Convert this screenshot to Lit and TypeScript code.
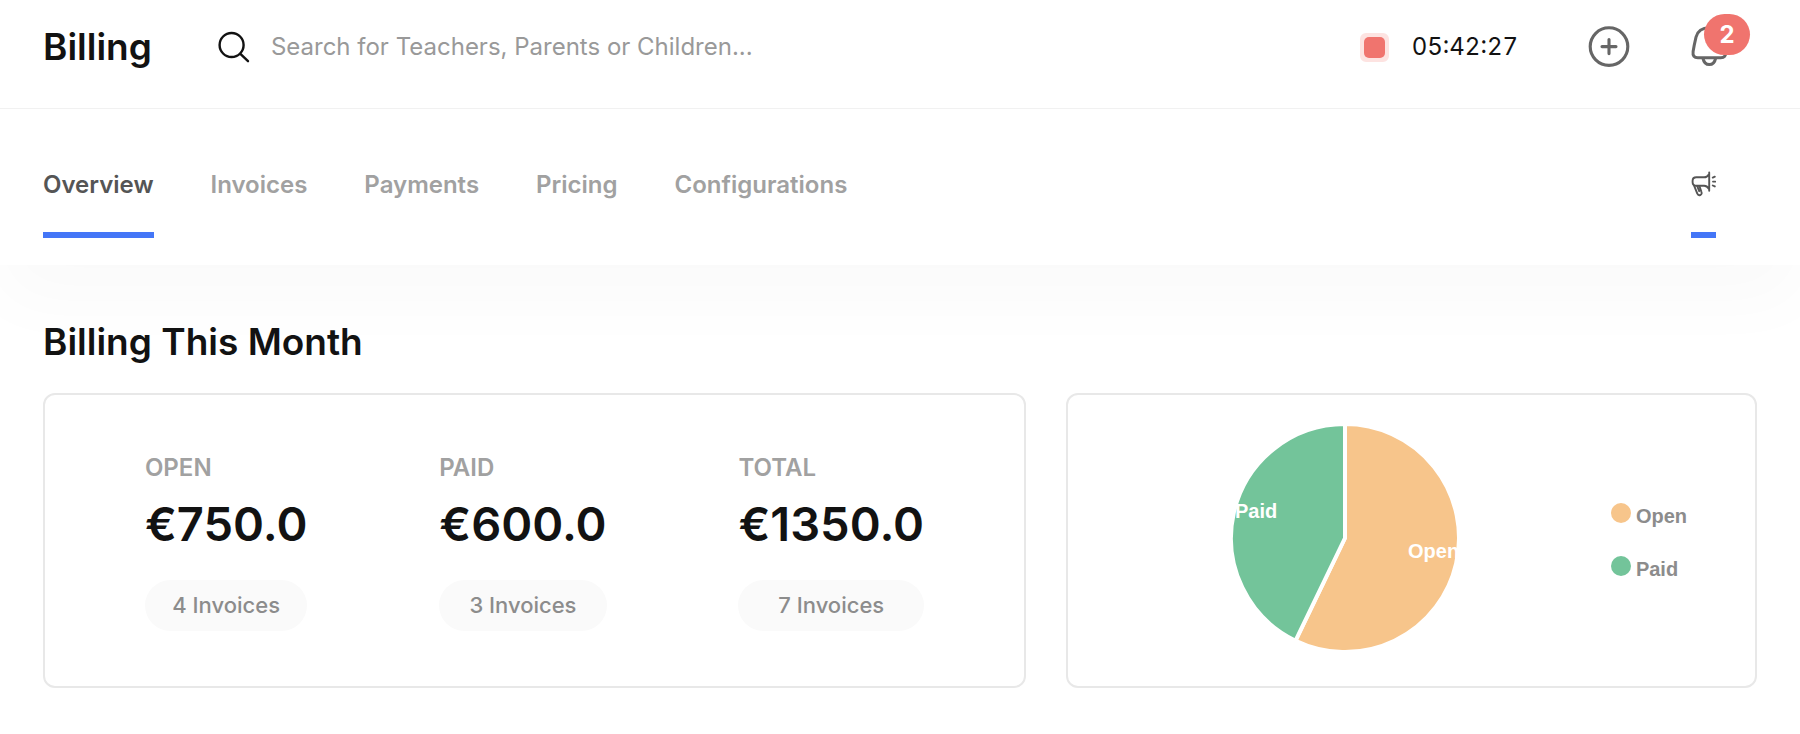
import { LitElement, html, css, svg } from "lit";
import { customElement, property } from "lit/decorators.js";
import { classMap } from "lit/directives/class-map.js";

interface Slice {
  label: string;
  amount: number;
  invoices: number;
  tone: string;
}

const SLICES: Slice[] = [
  { label: "Open", amount: 750, invoices: 4, tone: "open" },
  { label: "Paid", amount: 600, invoices: 3, tone: "paid" },
];

@customElement("billing-header")
class BillingHeader extends LitElement {
  static styles = css`
    :host {
      display: block;
      border-bottom: 1px solid #f1f1f1;
    }
    .bar {
      display: flex;
      align-items: center;
      height: 44px;
      padding: 25px 43px 39px;
    }
    .title {
      margin: 0;
      font-size: 37px;
      line-height: 44px;
      font-weight: 600;
    }
    .search {
      display: flex;
      align-items: center;
      flex: 1;
      gap: 21px;
      margin-left: 66px;
      min-width: 0;
    }
    .search svg,
    .icon svg {
      display: block;
      flex: none;
    }
    .field {
      flex: 1;
      min-width: 0;
      padding: 0;
      border: 0;
      outline: 0;
      background: transparent;
      font: inherit;
      font-size: 24px;
      line-height: 32px;
      color: #121212;
    }
    .field::placeholder {
      color: #999;
      opacity: 1;
    }
    .timer {
      display: flex;
      align-items: center;
      gap: 23px;
    }
    .stop {
      width: 29px;
      height: 29px;
      padding: 0;
      border: 4px solid #fde3e1;
      border-radius: 6px;
      background: #fde3e1;
    }
    .stop span {
      display: block;
      height: 21px;
      border-radius: 5px;
      background: #f0746e;
    }
    .time {
      font-size: 24px;
      line-height: 32px;
      font-variant-numeric: tabular-nums;
    }
    .icon {
      position: relative;
      padding: 0;
      border: 0;
      background: none;
      color: #666;
    }
    .add {
      margin-left: 70px;
    }
    .bell {
      margin: 0 27px 0 58px;
    }
    .badge {
      position: absolute;
      left: 16px;
      top: -11px;
      width: 46px;
      border-radius: 21px;
      background: #f0746e;
      color: #fff;
      font-family: Inter, sans-serif;
      font-size: 24px;
      font-weight: 700;
      line-height: 41px;
      text-align: center;
    }
  `;

  render() {
    return html`
      <header class="bar">
        <h1 class="title">Billing</h1>
        <label class="search">
          <svg width="32" height="32" viewBox="0 0 32 32" fill="none" stroke="#121212" stroke-width="2.4" stroke-linecap="round" aria-hidden="true">
            <circle cx="13.6" cy="14" r="12" />
            <path d="M22.4 22.8 30 30.2" />
          </svg>
          <input class="field" type="search" aria-label="Search" placeholder="Search for Teachers, Parents or Children..." />
        </label>
        <div class="timer">
          <button class="stop" aria-label="Stop timer"><span></span></button>
          <time class="time">05:42:27</time>
        </div>
        <button class="icon add" aria-label="Add">
          <svg width="42" height="42" viewBox="0 0 42 42" fill="none" stroke="currentColor" stroke-width="3.1" stroke-linecap="round">
            <circle cx="21" cy="20.6" r="18.8" />
            <path d="M21 13.600v14M14 20.600h14" />
          </svg>
        </button>
        <button class="icon bell" aria-label="Notifications, 2 unread">
          <svg width="42" height="44" viewBox="0 0 42 44" fill="none" stroke="currentColor" stroke-width="3" stroke-linejoin="round">
            <path d="M21.3 2.8C14 2.8 9.600 6 8 12.200 7 16.500 5.900 21.500 5.100 26.500c-.6 4.200 1.200 6.300 4.700 6.300h23c3.500 0 5.300-2.100 4.700-6.300-.8-5-1.900-10-2.900-14.300C33 6 28.600 2.800 21.300 2.800Z" />
            <path d="M15 33.400c.8 4 2.900 6.200 6.300 6.200s5.500-2.200 6.300-6.200" />
          </svg>
          <span class="badge">2</span>
        </button>
      </header>
    `;
  }
}

@customElement("billing-tabs")
class BillingTabs extends LitElement {
  static styles = css`
    :host {
      display: block;
      background: #fff;
      box-shadow: 0 36px 70px 0 rgba(0, 0, 0, 0.024);
    }
    .tabs {
      display: flex;
      align-items: stretch;
      gap: 57px;
      padding: 60px 84px 27px 43px;
    }
    .tab {
      display: flex;
      align-items: flex-start;
      height: 63px;
      border-bottom: 6px solid transparent;
      color: #a1a1a1;
      font-size: 24px;
      font-weight: 600;
      line-height: 32px;
      text-decoration: none;
    }
    .active {
      border-color: #4476f7;
      color: #555;
    }
    .news {
      margin-left: auto;
    }
    .news svg {
      display: block;
    }
  `;

  private names = ["Overview", "Invoices", "Payments", "Pricing", "Configurations"];

  render() {
    return html`
      <nav class="tabs" aria-label="Billing sections">
        ${this.names.map(
          (name, i) => html`<a href="#${name.toLowerCase()}" class=${classMap({ tab: true, active: i === 0 })}>${name}</a>`
        )}
        <a href="#news" class="tab active news" aria-label="Announcements">
          <svg width="25" height="32" viewBox="0 0 25 32" fill="none" stroke="currentColor" stroke-width="1.9" stroke-linecap="round" stroke-linejoin="round">
            <path d="M18.200 3.400v18.400M17.800 5.400c-1.200 2-2.600 2.900-4.600 2.900H5.400C3 8.300 1.600 9.600 1.600 11.800v1.400c0 2.200 1.400 3.500 3.800 3.500h7.800c2 0 3.400 1 4.600 3" />
            <path d="M3 16.400 6.200 24.400c.6 1.500 1.800 2.100 3.100 1.600 1.300-.5 1.700-1.700 1.100-3.200L8.400 17M6.200 17l2 5.200" />
            <path d="M21.800 8.600l2-.9M22 12.600h2.200M21.800 16.500l2 .9" />
          </svg>
        </a>
      </nav>
    `;
  }
}

@customElement("billing-stat")
class BillingStat extends LitElement {
  @property() label = "";
  @property({ type: Number }) amount = 0;
  @property({ type: Number }) invoices = 0;

  static styles = css`
    :host {
      display: flex;
      flex-direction: column;
    }
    .label {
      color: #a1a1a1;
      font-size: 24px;
      font-weight: 600;
      line-height: 32px;
      text-transform: uppercase;
    }
    .amount {
      margin: 8px 0 24px;
      font-size: 47px;
      font-weight: 600;
      line-height: 64px;
    }
    .count {
      border-radius: 26px;
      background: #fafafa;
      color: #8c8c8c;
      font-size: 22px;
      font-weight: 500;
      line-height: 51px;
      text-align: center;
    }
  `;

  render() {
    return html`
      <span class="label">${this.label}</span>
      <span class="amount">€${this.amount.toFixed(1)}</span>
      <span class="count">${this.invoices} Invoices</span>
    `;
  }
}

@customElement("billing-pie")
class BillingPie extends LitElement {
  @property({ attribute: false }) slices: Slice[] = [];

  static styles = css`
    :host {
      display: flex;
      align-items: center;
      font-family: "Liberation Sans", Arial, sans-serif;
      font-size: 20px;
      font-weight: 700;
    }
    .plot {
      display: flex;
      justify-content: center;
      flex: 1;
      padding: 0 0 6px 12px;
    }
    .pie {
      display: block;
    }
    .slice {
      stroke: #fff;
      stroke-width: 4px;
      stroke-linejoin: bevel;
    }
    .name {
      fill: #fff;
    }
    .open {
      fill: #f7c58b;
      background: #f7c58b;
    }
    .paid {
      fill: #73c49a;
      background: #73c49a;
    }
    .legend {
      display: grid;
      gap: 27px;
      margin: 0;
      padding: 3px 68px 0 0;
      list-style: none;
    }
    .entry {
      display: flex;
      gap: 5px;
      color: #8c8c8c;
      line-height: 26px;
    }
    .dot {
      width: 20px;
      height: 20px;
      border-radius: 50%;
    }
  `;

  private wedges() {
    const total = this.slices.reduce((sum, s) => sum + s.invoices, 0);
    const r = 114;
    let angle = 0;
    return this.slices.map((s) => {
      const from = angle;
      angle += (s.invoices / total) * Math.PI * 2;
      const point = (a: number) => `${(r * Math.sin(a)).toFixed(2)} ${(-r * Math.cos(a)).toFixed(2)}`;
      const large = angle - from > Math.PI ? 1 : 0;
      return svg`<path class="slice ${s.tone}" d="M0 0L${point(from)}A${r} ${r} 0 ${large} 1 ${point(angle)}Z" />`;
    });
  }

  render() {
    return html`
      <div class="plot">
        <svg class="pie" width="232" height="232" viewBox="-116 -116 232 232" role="img" aria-label="Open and paid invoices">
          ${this.wedges()}
          <text class="name" x="63" y="20">Open</text>
          <text class="name" x="-110" y="-20">Paid</text>
        </svg>
      </div>
      <ul class="legend">
        ${this.slices.map(
          (s) => html`<li class="entry"><span class="dot ${s.tone}"></span><span>${s.label}</span></li>`
        )}
      </ul>
    `;
  }
}

@customElement("app-root")
class AppRoot extends LitElement {
  static styles = css`
    :host {
      display: block;
      min-height: 100vh;
      background: #fff;
      color: #121212;
      font-family: Inter, sans-serif;
    }
    .content {
      position: relative;
      padding: 54px 43px 46px;
    }
    .heading {
      margin: 0 0 28px;
      font-size: 37px;
      font-weight: 600;
      line-height: 46px;
    }
    .cards {
      display: grid;
      grid-template-columns: 983fr 691fr;
      gap: 40px;
    }
    .card {
      box-sizing: border-box;
      border: 2px solid #e8e8e8;
      border-radius: 12px;
      background: #fff;
    }
    .stats {
      display: flex;
      justify-content: space-around;
      padding: 57px 34px 55px;
    }
  `;

  render() {
    const amount = SLICES.reduce((sum, s) => sum + s.amount, 0);
    const invoices = SLICES.reduce((sum, s) => sum + s.invoices, 0);
    return html`
      <billing-header></billing-header>
      <billing-tabs></billing-tabs>
      <main class="content">
        <h2 class="heading">Billing This Month</h2>
        <div class="cards">
          <section class="card stats">
            ${SLICES.map(
              (s) => html`<billing-stat label=${s.label} .amount=${s.amount} .invoices=${s.invoices}></billing-stat>`
            )}
            <billing-stat label="Total" .amount=${amount} .invoices=${invoices}></billing-stat>
          </section>
          <billing-pie class="card" .slices=${SLICES}></billing-pie>
        </div>
      </main>
    `;
  }
}
